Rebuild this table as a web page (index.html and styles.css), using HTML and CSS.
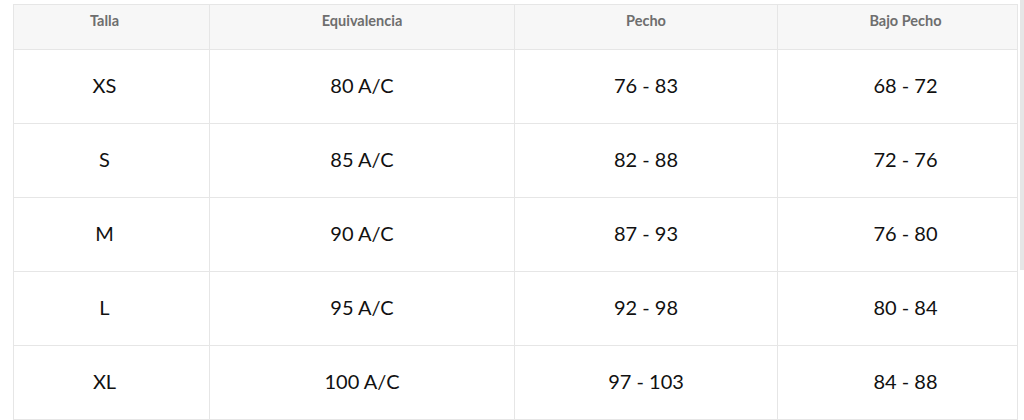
FILE: index.html
```html
<!DOCTYPE html>
<html lang="es">
<head>
<meta charset="utf-8">
<title>Tabla de tallas</title>
<link rel="stylesheet" href="styles.css">
</head>
<body>
<div class="wrap">
  <table class="sizes">
    <colgroup>
      <col class="c1"><col class="c2"><col class="c3"><col class="c4">
    </colgroup>
    <thead>
      <tr><th>Talla</th><th>Equivalencia</th><th>Pecho</th><th>Bajo Pecho</th></tr>
    </thead>
    <tbody>
      <tr><td>XS</td><td>80 A/C</td><td>76 - 83</td><td>68 - 72</td></tr>
      <tr><td>S</td><td>85 A/C</td><td>82 - 88</td><td>72 - 76</td></tr>
      <tr><td>M</td><td>90 A/C</td><td>87 - 93</td><td>76 - 80</td></tr>
      <tr><td>L</td><td>95 A/C</td><td>92 - 98</td><td>80 - 84</td></tr>
      <tr><td>XL</td><td>100 A/C</td><td>97 - 103</td><td>84 - 88</td></tr>
    </tbody>
  </table>
</div>
<div class="scroll-thumb"></div>
</body>
</html>
```
FILE: styles.css
```css
html, body {
  margin: 0;
  padding: 0;
  background: #ffffff;
  overflow: hidden;
}
body {
  font-family: "Lato", "Open Sans", sans-serif;
  color: #111111;
}
.wrap {
  padding: 4px 0 0 13px;
}
.sizes {
  border-collapse: collapse;
  table-layout: fixed;
  width: 1004px;
}
.c1 { width: 196px; }
.c2 { width: 305px; }
.c3 { width: 263px; }
.c4 { width: 240px; }
.sizes th,
.sizes td {
  border: 1px solid #e6e6e6;
  text-align: center;
}
.sizes th {
  background: #f7f7f7;
  color: #6e6e6e;
  font-size: 14.5px;
  font-weight: 700;
  height: 45px;
  padding: 7px 0 0;
  vertical-align: top;
  box-sizing: border-box;
}
.sizes td {
  font-size: 20px;
  font-weight: 400;
  height: 74px;
  padding: 0 0 3px;
  box-sizing: border-box;
}
.sizes th:first-child,
.sizes td:first-child {
  padding-right: 14px;
}
.sizes th:last-child,
.sizes td:last-child {
  padding-left: 16px;
}
.scroll-thumb {
  position: absolute;
  top: 0;
  right: 0;
  width: 4px;
  height: 270px;
  background: #e6e6e6;
}
```
